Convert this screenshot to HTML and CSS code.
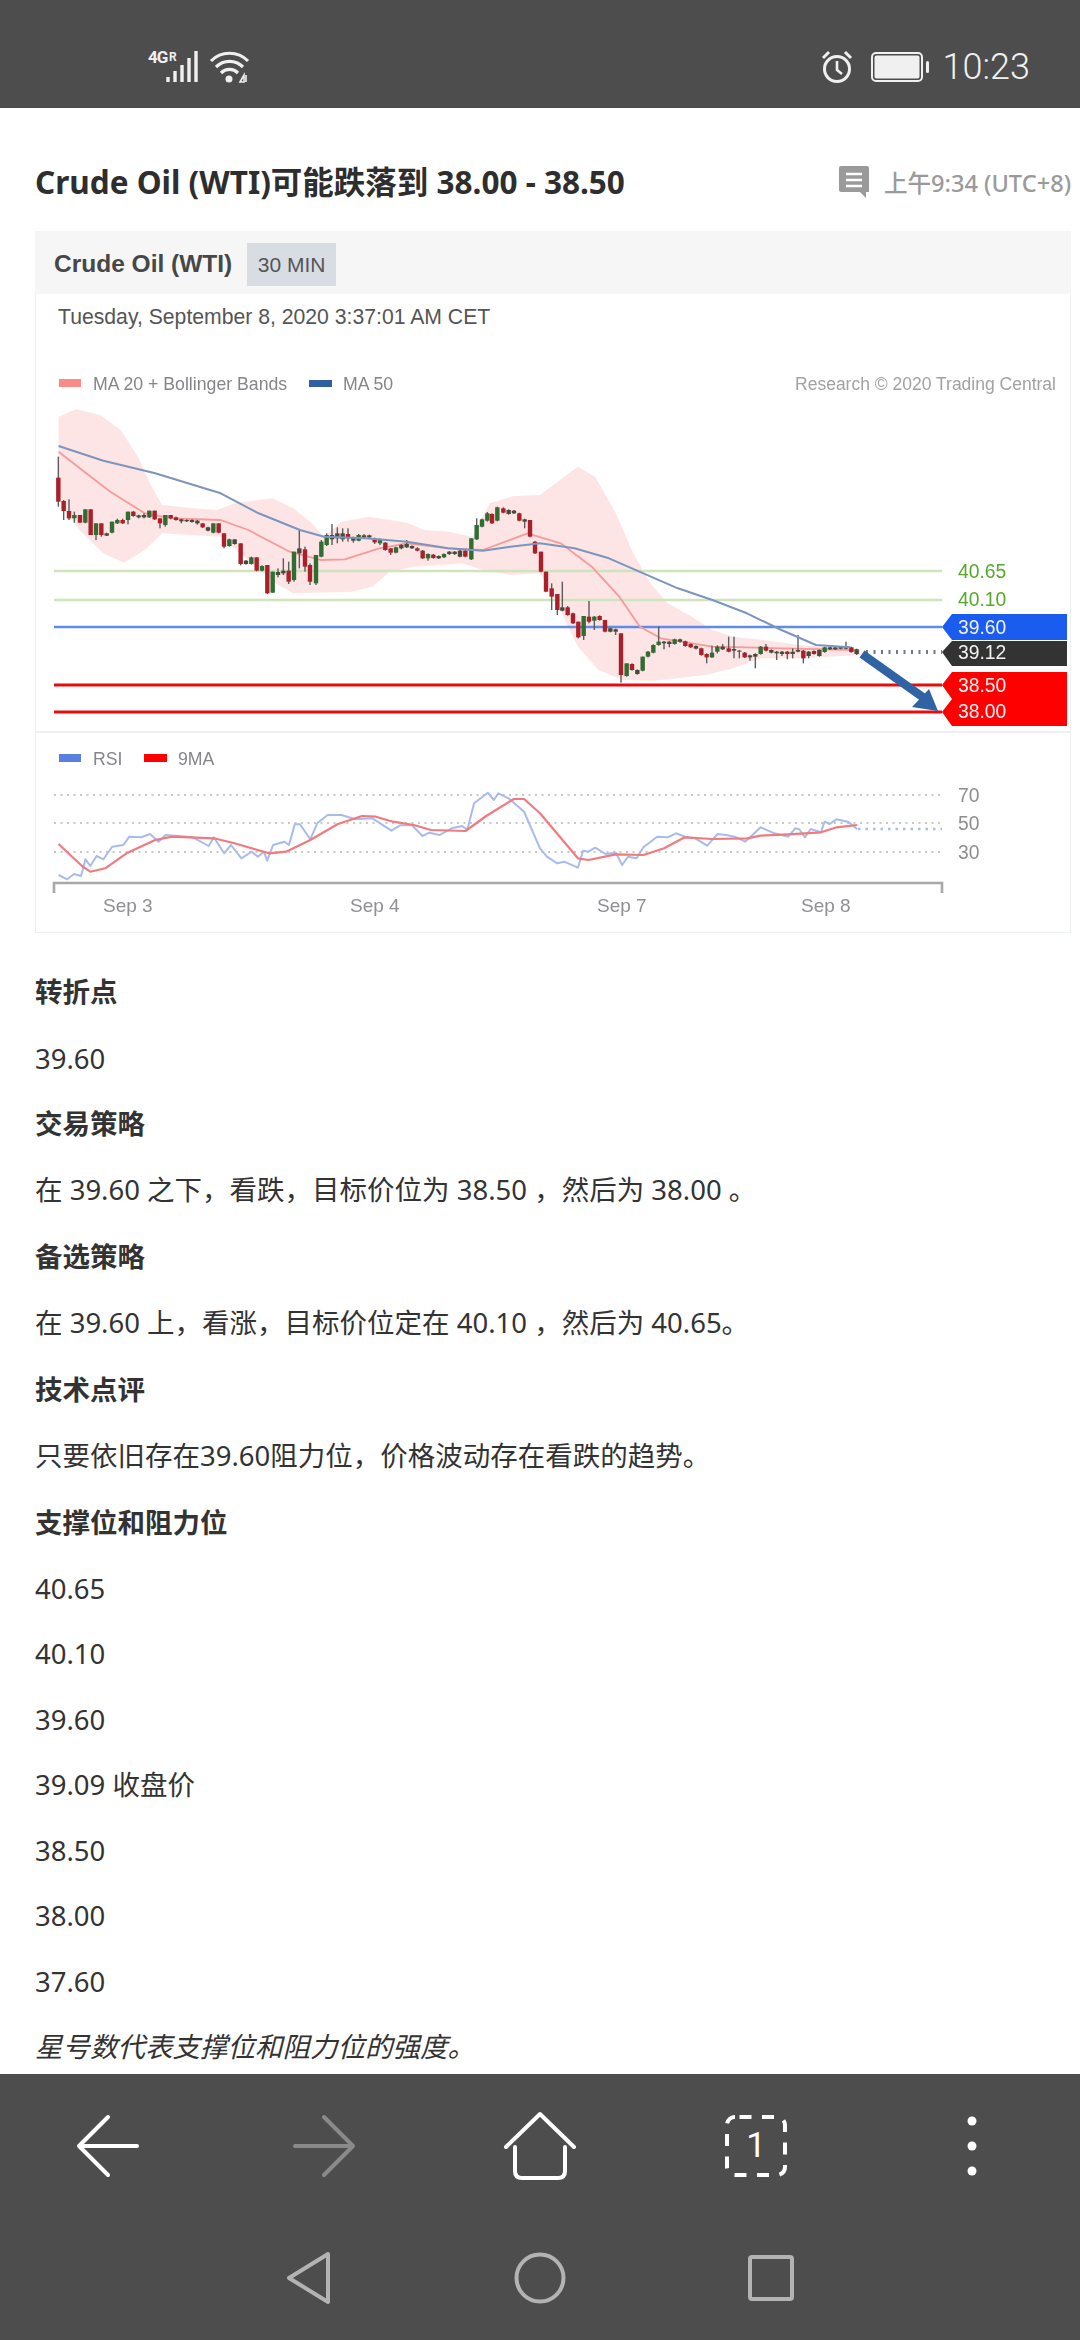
FILE: index.html
```html
<!DOCTYPE html>
<html lang="zh-CN">
<head>
    <meta charset="UTF-8">
    <meta name="viewport" content="width=device-width, initial-scale=1.0">
    <title>Crude Oil (WTI)</title>
    <link rel="stylesheet" href="styles.css">
</head>
<body>
    <div class="status-bar">
        <div class="status-left">
            <svg width="102" height="42" viewBox="0 -4 102 42">
                <text x="0" y="14" class="net-text">4G</text>
                <text x="21" y="12" class="net-text small">R</text>
                <path d="M20 33v-5M27 33V22M34 33V16M41 33V9M48 33V2" stroke="#f0f0f0" stroke-width="3.4" fill="none"/>
                <path d="M63 12a26 26 0 0 1 37 0M68 18a19 19 0 0 1 27 0M73 24a12 12 0 0 1 17 0" stroke="#f0f0f0" stroke-width="3.2" fill="none"/>
                <circle cx="81" cy="30" r="3.5" fill="#f0f0f0"/>
                <path d="M92 33l4-7v7zM98 26v7" stroke="#f0f0f0" stroke-width="1.6" fill="none"/>
            </svg>
        </div>
        <div class="status-right">
            <svg width="32" height="34" viewBox="0 0 32 34">
                <circle cx="16" cy="19" r="12.5" stroke="#f0f0f0" stroke-width="3" fill="none"/>
                <path d="M16 11v9l5 4" stroke="#f0f0f0" stroke-width="2.6" fill="none"/>
                <path d="M2 8l6-6M30 8l-6-6" stroke="#f0f0f0" stroke-width="3" fill="none"/>
            </svg>
            <svg width="60" height="30" viewBox="0 0 60 30">
                <rect x="1" y="1" width="50" height="28" rx="4" stroke="#f0f0f0" stroke-width="2" fill="none"/>
                <rect x="3.5" y="3.5" width="45" height="23" rx="2" fill="#f0f0f0"/>
                <rect x="55" y="9" width="3" height="12" rx="1.5" fill="#f0f0f0"/>
            </svg>
            <span class="clock">10:23</span>
        </div>
    </div>

    <div class="content">
        <div class="title-row">
            <h1>Crude Oil (WTI)可能跌落到 38.00 - 38.50</h1>
            <div class="stamp">
                <svg width="32" height="34" viewBox="0 0 32 34">
                    <path d="M3 1h26a2 2 0 0 1 2 2v24h-3v6l-6-6H3a2 2 0 0 1-2-2V3a2 2 0 0 1 2-2z" fill="#9a9a9a"/>
                    <path d="M8 9h16M8 15h16M8 21h16" stroke="#fff" stroke-width="2.4"/>
                </svg>
                <span>上午9:34 (UTC+8)</span>
            </div>
        </div>

        <div class="chart-card">
            <div class="chart-head">
                <span class="chart-name">Crude Oil (WTI)</span>
                <span class="chart-period">30 MIN</span>
            </div>
            <div class="chart-date">Tuesday, September 8, 2020 3:37:01 AM CET</div>
            <svg class="chart" width="1036" height="593" viewBox="35 340 1036 593">
                <path id="band" fill="#fde5e5"/>

                <rect x="59" y="379" width="22" height="8" fill="#fa8a8a"/>
                <text x="93" y="390" class="legend">MA 20 + Bollinger Bands</text>
                <rect x="309" y="380" width="23" height="7" fill="#2f5f9f"/>
                <text x="343" y="390" class="legend">MA 50</text>
                <text x="1056" y="390" class="legend end">Research © 2020 Trading Central</text>

                <path d="M54 571H942M54 600H942" stroke="#cfe3bd" stroke-width="2.4"/>
                <path d="M54 627H942" stroke="#5f8cea" stroke-width="2.4"/>
                <path d="M54 685H942M54 712H942" stroke="#e80c0c" stroke-width="3"/>

                <path id="ma20" class="curve" stroke="#f79a9a" stroke-width="1.8"/>
                <g id="candles"></g>
                <path id="ma50" class="curve" stroke="#7c95bd" stroke-width="2"/>

                <path d="M866 652H942" stroke="#6f7a85" stroke-width="4" stroke-dasharray="2 5.5"/>
                <path d="M862 654L924 698" stroke="#2f63a3" stroke-width="8.5"/>
                <path d="M938 711L912 707L929 689z" fill="#2f63a3"/>

                <text x="958" y="578" class="price green">40.65</text>
                <text x="958" y="606" class="price green">40.10</text>
                <path d="M942 627L952 614H1067V640H952z" fill="#1a5cf0"/>
                <text x="958" y="634" class="price white">39.60</text>
                <path d="M942 652L952 641H1067V666H952z" fill="#333"/>
                <text x="958" y="659" class="price white">39.12</text>
                <path d="M942 685L952 672H1067V726H952L942 712L952 699z" fill="#f00"/>
                <text x="958" y="692" class="price white">38.50</text>
                <text x="958" y="718" class="price white">38.00</text>

                <path d="M35 732H1071" stroke="#eef1f3" stroke-width="2"/>
                <rect x="59" y="754" width="22" height="8" fill="#5b7fe0"/>
                <text x="93" y="765" class="legend">RSI</text>
                <rect x="144" y="754" width="23" height="8" fill="#f00"/>
                <text x="178" y="765" class="legend">9MA</text>

                <path d="M54 795H942M54 823H942M54 852H942" stroke="#c8c8c8" stroke-width="2" stroke-dasharray="2 4.5"/>
                <path id="rsi" class="curve" stroke="#a7bbec" stroke-width="2"/>
                <path d="M858 829H942" stroke="#a9bcec" stroke-width="2.4" stroke-dasharray="2.5 5"/>
                <path id="ma9" class="curve" stroke="#f07a7e" stroke-width="2.2"/>

                <text x="958" y="802" class="price grey">70</text>
                <text x="958" y="830" class="price grey">50</text>
                <text x="958" y="859" class="price grey">30</text>

                <path d="M54 893V883H942V893" stroke="#a8a8a8" stroke-width="2.6" fill="none"/>
                <text x="103" y="912" class="axis">Sep 3</text>
                <text x="350" y="912" class="axis">Sep 4</text>
                <text x="597" y="912" class="axis">Sep 7</text>
                <text x="801" y="912" class="axis">Sep 8</text>
            </svg>
        </div>

        <h3>转折点</h3>
        <p class="num">39.60</p>
        <h3>交易策略</h3>
        <p>在 39.60 之下，看跌，目标价位为 38.50 ，然后为 38.00 。</p>
        <h3>备选策略</h3>
        <p>在 39.60 上，看涨，目标价位定在 40.10 ，然后为 40.65。</p>
        <h3>技术点评</h3>
        <p>只要依旧存在39.60阻力位，价格波动存在看跌的趋势。</p>
        <h3>支撑位和阻力位</h3>
        <p class="num">40.65</p>
        <p class="num">40.10</p>
        <p class="num">39.60</p>
        <p>39.09 收盘价</p>
        <p class="num">38.50</p>
        <p class="num">38.00</p>
        <p class="num">37.60</p>
        <p class="note">星号数代表支撑位和阻力位的强度。</p>
    </div>

    <div class="bottom-bar">
        <div class="toolbar">
            <svg width="64" height="64" viewBox="0 0 64 64" class="icon-white">
                <path d="M61 32H3M32 3L3 32M32 61L3 32"/>
            </svg>
            <svg width="64" height="64" viewBox="0 0 64 64" class="icon-dim">
                <path d="M3 32H61M32 3L61 32M32 61L61 32"/>
            </svg>
            <svg width="76" height="70" viewBox="0 0 76 70" class="icon-white">
                <path d="M4 36L38 3L72 36M13 36V60q0 7 7 7H56q7 0 7-7V36"/>
            </svg>
            <div class="tab-count">
                <svg width="62" height="62" viewBox="0 0 62 62" class="icon-white thin">
                    <rect x="2" y="2" width="58" height="58" rx="8" stroke-dasharray="12 10.5" stroke-dashoffset="18"/>
                </svg>
                <span>1</span>
            </div>
            <svg width="12" height="64" viewBox="0 0 12 64" fill="#fff">
                <circle cx="6" cy="7" r="4.5"/><circle cx="6" cy="32" r="4.5"/><circle cx="6" cy="57" r="4.5"/>
            </svg>
        </div>
        <div class="nav">
            <svg width="60" height="54" viewBox="0 0 60 54" class="icon-nav">
                <path d="M51 3L12 27L51 51z"/>
            </svg>
            <svg width="54" height="54" viewBox="0 0 54 54" class="icon-nav">
                <circle cx="27" cy="27" r="23.5"/>
            </svg>
            <svg width="60" height="54" viewBox="0 0 60 54" class="icon-nav">
                <rect x="7" y="6" width="42" height="42" rx="2"/>
            </svg>
        </div>
    </div>

    <script src="chart.js"></script>
</body>
</html>
```

FILE: styles.css
```css
* {
    box-sizing: border-box;
}

body {
    font-family: "Noto Sans", "Noto Sans CJK SC", sans-serif;
    margin: 0;
    padding: 0;
    width: 1080px;
    height: 2340px;
    display: flex;
    flex-direction: column;
    overflow: hidden;
    background-color: #fff;
    color: #333;
}

.status-bar {
    height: 108px;
    flex: none;
    background-color: #4d4d4d;
    display: flex;
    justify-content: space-between;
    align-items: center;
    padding: 26px 50px 0 148px;
    color: #f0f0f0;
}

.status-left {
    display: flex;
    margin-top: -2px;
}

.status-right {
    display: flex;
    align-items: center;
    gap: 18px;
}

.net-text {
    font: bold 17px "Roboto", sans-serif;
    letter-spacing: -1px;
    fill: #f0f0f0;
}

.net-text.small {
    font-size: 12px;
}

.clock {
    font: 300 36px "Roboto", sans-serif;
    margin-left: -6px;
}

.content {
    flex: 1;
    overflow: hidden;
    padding: 54px 9px 0 35px;
}

.title-row {
    display: flex;
    justify-content: space-between;
    align-items: center;
    height: 40px;
    margin-bottom: 29px;
}

h1 {
    font-size: 31.5px;
    font-weight: bold;
    line-height: 40px;
    margin: 0;
    color: #2e2e2e;
}

.stamp {
    display: flex;
    align-items: center;
    gap: 14px;
    font-size: 23.6px;
    font-weight: 500;
    color: #9a9a9a;
}

.chart-card {
    width: 1036px;
    height: 702px;
    margin-bottom: 39px;
    box-shadow: inset 0 0 0 1px #eef1f3;
    font-family: "Liberation Sans", sans-serif;
}

.chart-head {
    height: 63px;
    background-color: #f6f6f6;
    display: flex;
    align-items: center;
    gap: 15px;
    padding: 3px 0 0 19px;
}

.chart-name {
    font-size: 24.5px;
    font-weight: bold;
    color: #474747;
}

.chart-period {
    background-color: #d8dde3;
    color: #555;
    font-size: 21px;
    height: 43px;
    line-height: 43px;
    padding: 0 10.5px;
}

.chart-date {
    height: 46px;
    padding: 4px 0 0 23px;
    font-size: 21.2px;
    line-height: 38px;
    color: #555;
}

.chart {
    display: block;
    filter: blur(0.7px);
}

.curve {
    fill: none;
    stroke-linejoin: round;
}

.legend {
    font-size: 17.7px;
    fill: #85858a;
}

.legend.end {
    font-size: 17.5px;
    text-anchor: end;
    fill: #a2a2a2;
}

.axis {
    font-size: 19px;
    fill: #8f8f94;
}

.price {
    font-size: 19.3px;
}

.price.green {
    fill: #57a82c;
}

.price.white {
    fill: #f2f2f2;
}

.price.grey {
    fill: #8f8f8f;
}

h3, p {
    font-size: 27.5px;
    line-height: 40px;
    height: 40px;
    margin: 0 0 26.5px;
    white-space: nowrap;
    color: #333;
}

h3 {
    font-weight: bold;
}

p.num {
    margin-bottom: 25.2px;
}

.note {
    font-style: italic;
}

.bottom-bar {
    height: 266px;
    flex: none;
    background-color: #4d4d4d;
    display: flex;
    flex-direction: column;
}

.toolbar {
    height: 144px;
    display: grid;
    grid-template-columns: repeat(5, 216px);
    justify-items: center;
    align-items: center;
}

.tab-count {
    position: relative;
    width: 62px;
    height: 62px;
}

.tab-count svg {
    display: block;
}

.tab-count span {
    position: absolute;
    left: 0;
    right: 0;
    top: 0;
    text-align: center;
    font: 400 35px/62px "Roboto", sans-serif;
    color: #fff;
}

.nav {
    height: 120px;
    display: flex;
    justify-content: center;
    align-items: center;
    gap: 176px;
}

.icon-white, .icon-dim, .icon-nav {
    fill: none;
    stroke-linecap: round;
    stroke-linejoin: round;
}

.icon-white {
    stroke: #fff;
    stroke-width: 4;
}

.icon-white.thin {
    stroke-width: 4;
    stroke-linecap: butt;
}

.icon-dim {
    stroke: #8a8a8a;
    stroke-width: 4;
}

.icon-nav {
    stroke: #b3b3b3;
    stroke-width: 4;
}
```

FILE: chart.js
```js
// Chart data is in 1/3 px units, each block has its own origin
const NS = 'http://www.w3.org/2000/svg';
const RED = '#a9202a';
const GREEN = '#2f6d31';
const WICK = '#5c5c5c';

// [x, bodyTop, bodyBottom, wickTop, wickBottom, colour]
const r = RED, g = GREEN, d = '#4a4a3c';
const candleBlocks = [
    { x: 50, y: 440, bars: [
        [25,113,185,50,200,r],[41,183,213,180,240,r],[57,213,235,178,240,r],[73,225,235,215,248,g],
        [90,225,248,225,248,r],[106,208,248,208,250,g],[122,208,285,208,285,r],[138,250,285,250,300,g],
        [154,250,285,250,290,r],[170,280,287,278,288,d],[186,245,278,245,280,g],[202,240,250,236,252,g],
        [218,240,250,236,252,r],[234,215,240,215,253,g],[250,215,228,213,230,r],[266,226,232,224,235,d],
        [282,225,232,220,235,d],[298,212,232,212,234,g],[314,212,238,212,240,r],[330,235,250,235,265,r],
        [346,225,255,225,260,g],[362,225,235,225,238,r],[378,232,240,230,242,r],[394,238,244,236,250,d],
        [410,240,244,238,246,d],[426,240,246,238,248,d],[442,242,250,240,254,d],[458,250,262,250,264,r],
        [474,262,272,260,274,d],[490,250,278,250,280,g],[506,250,278,250,280,r],[522,280,320,280,325,r],
        [538,298,318,296,320,g],[554,298,312,298,314,d],[572,310,372,310,376,r],[588,362,372,360,374,d],
        [604,352,372,350,374,g],[620,352,392,352,394,r],[636,378,392,376,394,g],[652,375,460,375,462,r],
        [668,395,458,395,458,g],[684,396,405,385,412,d],[700,392,400,355,405,d],[716,392,425,365,432,r]
    ] },
    { x: 290, y: 480, bars: [
        [12,215,300,215,305,g],[28,205,220,150,265,d],[45,208,260,200,275,r],[60,255,305,250,315,r],
        [78,225,310,225,315,g],[94,185,230,180,232,g],[110,165,195,160,198,g],[126,165,178,132,195,d],
        [142,160,175,142,190,d],[158,160,178,145,185,d],[174,162,175,145,185,r],[190,172,182,170,188,d],
        [206,165,182,162,184,g],[222,166,172,162,175,d],[238,166,172,164,175,d],[254,175,187,173,192,r],
        [270,178,190,175,195,g],[286,188,210,186,212,r],[302,205,218,205,225,r],[318,202,218,200,220,g],
        [334,195,205,192,208,d],[350,192,202,180,204,d],[366,198,205,196,207,d],[382,205,212,202,214,r],
        [398,212,235,210,237,r],[414,222,235,220,242,g],[430,224,234,222,236,r],[446,228,235,226,237,d],
        [462,222,232,220,234,g],[478,215,222,213,225,d],[494,215,222,213,225,d],[510,212,230,208,232,d],
        [526,212,230,208,232,r],[544,175,238,175,240,g],[560,135,178,115,180,g],[576,118,140,116,142,g],
        [592,100,122,96,125,g],[606,102,130,100,132,r],[622,82,122,80,124,g],[640,85,98,82,100,r],
        [656,90,102,88,104,d],[672,92,100,90,102,d],[688,100,122,98,124,r],[704,118,125,116,145,d]
    ] },
    { x: 530, y: 500, bars: [
        [0,60,110,60,112,r],[15,125,160,123,162,r],[33,155,215,155,217,r],[48,215,275,215,277,r],
        [65,265,290,250,330,r],[82,282,330,282,345,r],[97,322,332,245,334,d],[113,322,345,318,347,r],
        [129,340,370,338,372,r],[145,365,412,365,415,r],[161,348,408,348,420,g],[177,350,365,303,370,r],
        [193,350,362,348,390,g],[209,348,360,346,362,r],[225,360,395,360,397,r],[241,385,395,383,397,d],
        [257,388,395,386,405,d],[273,400,525,400,548,r],[290,490,528,490,530,g],[306,492,510,490,512,r],
        [322,510,522,508,524,d],[338,470,512,470,514,g],[354,455,470,453,472,g],[370,435,458,433,460,g],
        [386,425,435,380,437,g],[402,425,430,423,448,d],[418,425,432,423,442,d],[434,418,432,416,434,g],
        [450,418,425,416,428,d],[466,424,438,422,440,r],[482,432,442,430,444,r],[498,438,446,436,448,d],
        [514,445,465,443,467,r],[530,462,472,460,490,r],[546,458,472,437,474,g],[562,440,455,436,460,g],
        [578,440,448,432,450,d],[596,445,455,410,457,r],[612,447,452,410,475,d],[628,452,455,450,475,d],
        [644,458,472,456,474,r],[660,466,472,464,482,d],[676,462,470,460,505,d],[692,440,462,438,464,g],
        [708,440,452,432,454,r],[724,450,458,448,460,d],[740,455,460,453,480,d],[756,455,462,453,468,d],
        [772,455,462,453,478,r]
    ] },
    { x: 700, y: 590, bars: [
        [278,185,192,175,205,d],[294,180,185,135,187,d],[310,182,205,180,220,r],[326,185,198,183,205,d],
        [342,183,192,181,194,r],[358,180,198,178,200,d],[374,172,186,170,188,g],[390,172,178,170,180,d],
        [406,172,178,170,180,d],[422,170,176,168,178,d],[438,170,176,155,178,d],[454,172,186,170,188,r],
        [470,178,192,176,195,d]
    ] }
];

const candles = document.getElementById('candles');
function addRect(x, y, w, h, fill) {
    const el = document.createElementNS(NS, 'rect');
    el.setAttribute('x', x);
    el.setAttribute('y', y);
    el.setAttribute('width', w);
    el.setAttribute('height', h);
    el.setAttribute('fill', fill);
    candles.appendChild(el);
}
candleBlocks.forEach(function(block) {
    block.bars.forEach(function(b) {
        const cx = block.x + b[0] / 3;
        addRect(cx - 0.7, block.y + b[3] / 3, 1.4, (b[4] - b[3]) / 3, WICK);
        addRect(cx - 2.2, block.y + b[1] / 3, 4.4, (b[2] - b[1]) / 3, b[5]);
    });
});

function toPage(points, x0, y0) {
    const out = [];
    for (let i = 0; i < points.length; i += 2) {
        out.push((x0 + points[i] / 2.9).toFixed(1) + ' ' + (y0 + points[i + 1] / 3).toFixed(1));
    }
    return out;
}
function setLine(id, parts, close) {
    document.getElementById(id).setAttribute('d', 'M' + parts.join('L') + (close ? 'z' : ''));
}

setLine('band', [].concat(
    toPage([170,230,220,208,290,225,350,270,400,350,440,440,470,495,560,505,630,510,680,490,790,475,850,505,900,545,940,590,990,545,1070,530,1180,548,1230,570,1300,575,1370,590,1420,490,1490,468], 0, 340),
    toPage([0,465,110,380,160,410,220,520,270,640,320,730,370,790,440,830,500,870,560,890,650,900,750,915,930,928,930,945,750,955,640,955,560,985,480,1005,330,1022,240,1020,170,990,110,920,50,790,0,700], 540, 340),
    toPage([1480,705,1400,690,1340,670,1200,680,1130,695,1080,740,1020,755,850,760,800,730,640,590,470,580,420,630,360,668,300,640,230,570,170,480], 0, 340)
), true);

setLine('ma50', [].concat(
    toPage([170,318,300,362,450,400,640,460,750,520,870,570,940,590,1060,595,1180,605,1300,625,1400,632,1480,620], 0, 340),
    toPage([0,610,100,625,200,655,300,700,400,745,500,780,600,820,700,870,800,915,900,922], 540, 340)
));

setLine('ma20', [].concat(
    toPage([170,335,250,400,320,455,420,520,500,535,640,540,720,570,840,635,930,660,1000,658,1100,625,1180,610,1300,625,1400,630,1530,580], 0, 340),
    toPage([60,610,150,680,230,770,290,860,350,895,500,920,700,925,920,930], 540, 340)
));

setLine('rsi', [].concat(
    toPage([170,465,195,478,215,462,235,468,248,418,262,438,280,408,300,418,325,380,358,375,375,350,410,352,435,342,460,365,480,345,560,352,605,378,620,352,650,400,670,375,700,415,730,395,748,410,765,395,775,422,792,375,825,365,838,375,855,313,870,313,900,358,920,310,950,285,990,285,1030,298,1080,295,1135,332,1160,316,1195,316,1225,348,1245,338,1275,345,1310,325,1340,318,1355,330,1375,250,1415,218,1432,240,1445,220,1475,235,1520,275,1530,300], 0, 720),
    toPage([0,385,20,410,50,430,70,425,110,443,125,392,140,395,160,383,190,402,220,398,238,435,255,410,280,415,300,382,340,350,370,352,395,340,420,350,450,355,485,377,515,342,540,345,565,350,595,365,640,322,680,340,720,350,740,325,752,328,768,352,785,327,815,337,825,305,840,312,860,298,895,306,920,328], 540, 720)
));

setLine('ma9', [].concat(
    toPage([170,372,240,440,262,455,305,445,370,398,450,360,500,350,620,355,680,370,780,400,830,395,900,360,980,312,1050,288,1090,290,1140,305,1200,315,1250,330,1350,333,1410,288,1490,237,1520,237], 0, 720),
    toPage([0,280,110,415,140,420,220,403,300,405,360,385,420,352,500,357,600,355,640,347,720,343,815,337,860,322,920,315], 540, 720)
));
```
